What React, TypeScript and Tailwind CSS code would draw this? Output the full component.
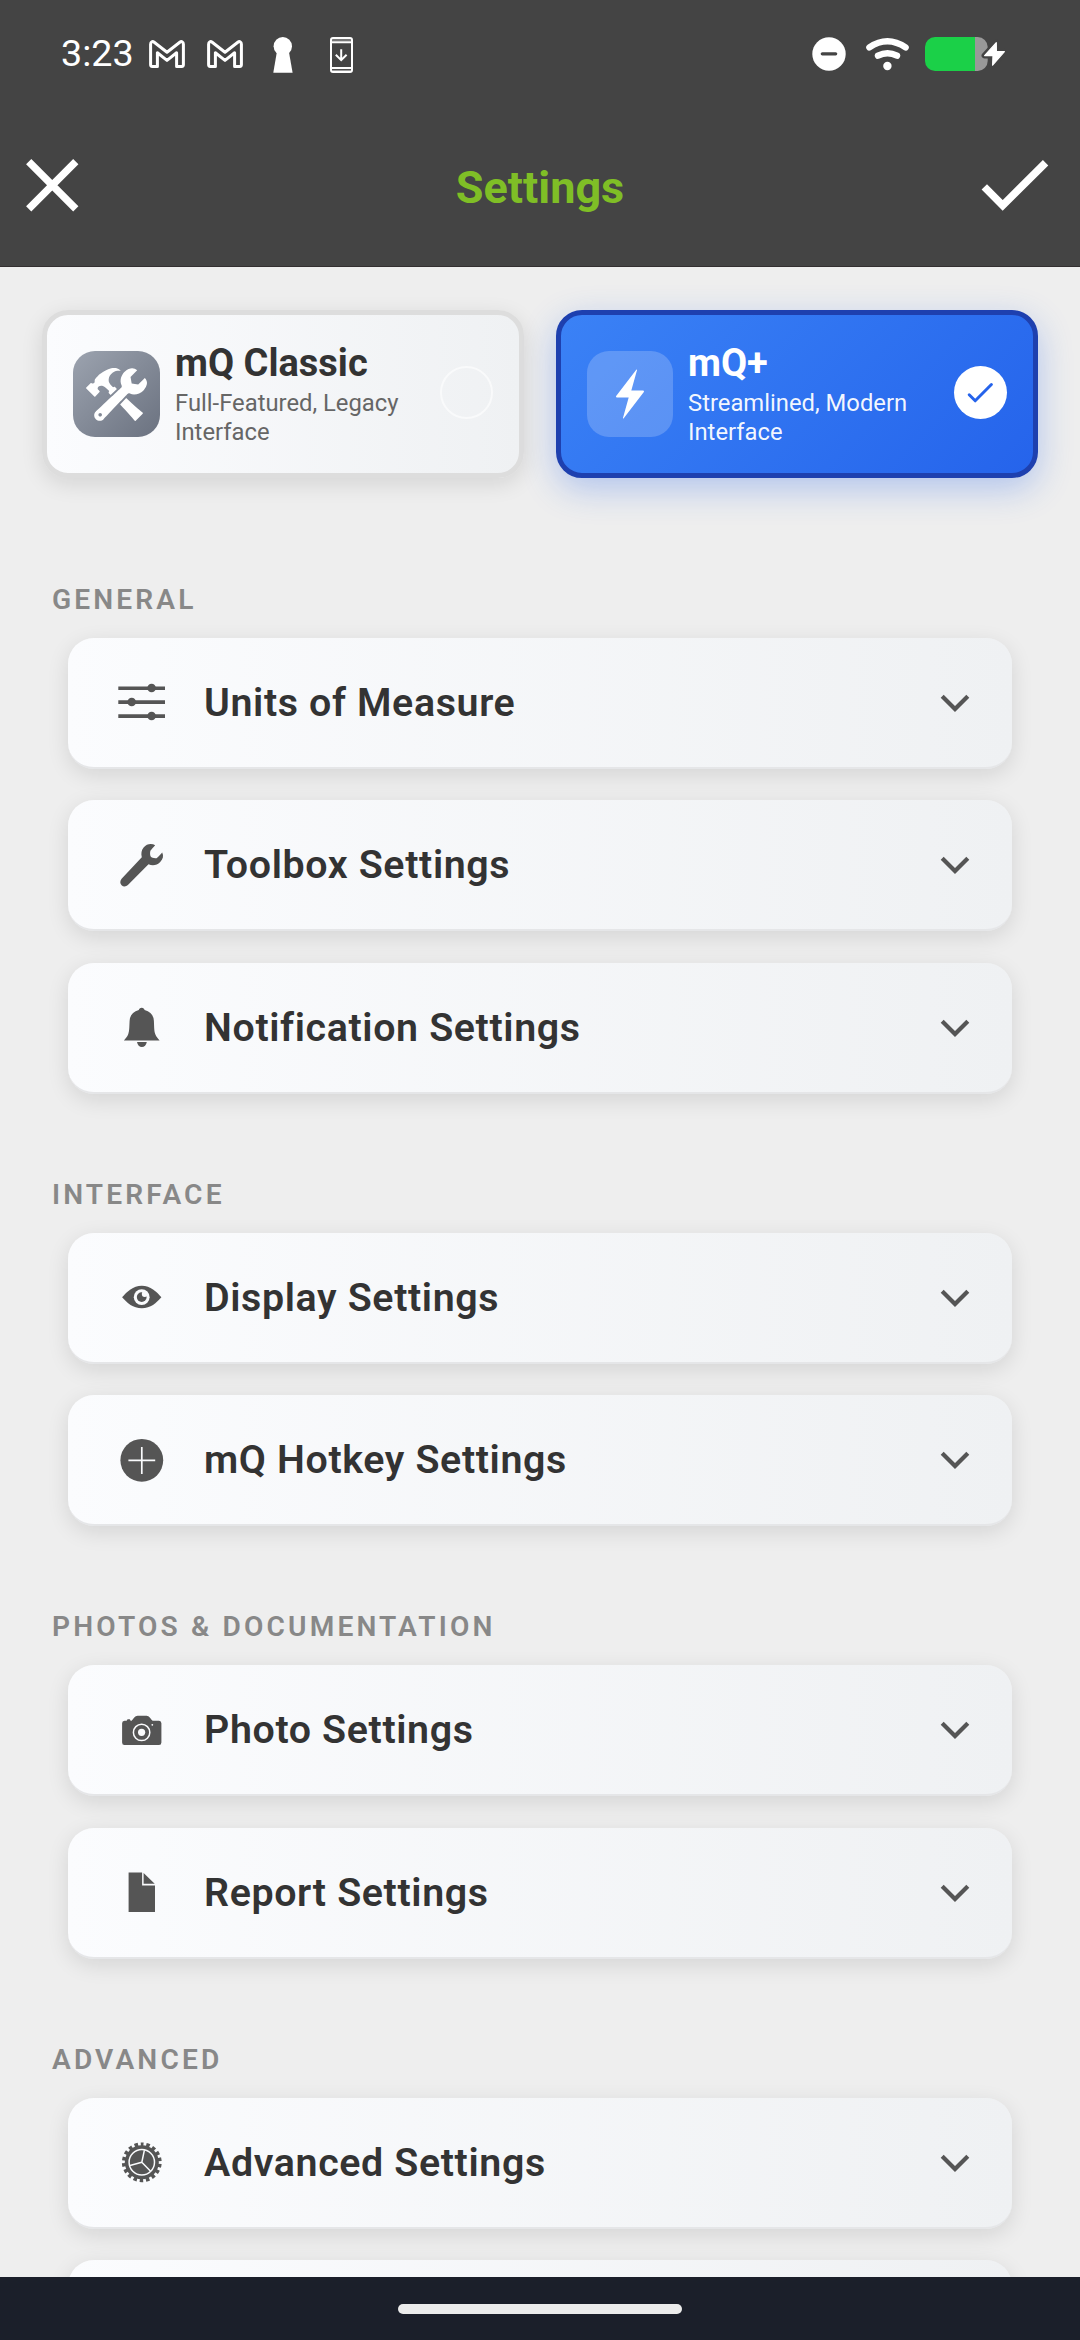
import type { ReactNode } from "react";
import { IoIosConstruct, IoIosFlash } from "react-icons/io";

function GmailGlyph() {
  return (
    <svg className="h-9 w-9" viewBox="0 0 36 36" fill="none" stroke="#fff" strokeWidth="3" strokeLinejoin="round">
      <path d="M1.6 27.5V7.2C1.6 4.6 3.6 4 5.2 5.2L18 15.2L30.8 5.2C32.4 4 34.4 4.6 34.4 7.2V27.5Q34.4 29.4 32.8 29.4H27.6V15.8L18 23.4L8.4 15.8V29.4H3.2Q1.6 29.4 1.6 27.5Z" />
    </svg>
  );
}

function StatusBar() {
  return (
    <div className="flex h-[110px] shrink-0 items-center pl-[61px] pr-[75px] text-white">
      <span className="mb-1 w-[73px] whitespace-nowrap text-[37.7px] leading-[44px]">3:23</span>
      <div className="ml-[15px] flex items-center gap-[22px]">
        <GmailGlyph />
        <GmailGlyph />
      </div>
      <svg className="ml-[30px] h-9 w-5" viewBox="0 0 20 36" fill="#fff">
        <circle cx="9.8" cy="9.2" r="9.2" />
        <path d="M4.2 13H15.6L19.6 35.8H.3Z" />
      </svg>
      <svg className="ml-[37px] h-9 w-[23px]" viewBox="0 0 23 36" fill="none" stroke="#fff" strokeWidth="2">
        <rect x="1" y="1" width="21" height="34" rx="2" />
        <path d="M2 5.3H21M2 31H21" />
        <path d="M2 3H21M2 33.4H21" strokeWidth="1" stroke="#aaa" />
        <path d="M11.2 12.3V22.6M5.8 17.8L11.2 23.2L16.6 17.8" />
      </svg>
      <svg className="ml-auto h-9 w-[34px]" viewBox="0 0 34 36">
        <circle cx="17" cy="17" r="16.7" fill="#fff" />
        <path d="M10.3 16.8H23.7" stroke="#444" strokeWidth="3.2" strokeLinecap="round" />
      </svg>
      <svg className="ml-5 h-9 w-[43px]" viewBox="0 0 43 36" fill="none" stroke="#fff" strokeWidth="6.4" strokeLinecap="round">
        <path d="M3.4 10.4Q21.4 -1.8 39.6 10.4M12 18.7Q21.5 13.9 31 18.7" />
        <circle cx="21.4" cy="29" r="4.2" fill="#fff" stroke="none" />
      </svg>
      <svg className="ml-4 h-9 w-20" viewBox="0 0 80 36">
        <path d="M50 0H52.7A10 10 0 0 1 62.7 10V24A10 10 0 0 1 52.7 34H50Z" fill="#999" />
        <path d="M50 0H10A10 10 0 0 0 0 10V24A10 10 0 0 0 10 34H50Z" fill="#1bd048" />
        <path d="M71.3 5.7L59.6 18.6H68L67.6 28.2L79.4 14.6H71.4Z" fill="#fff" stroke="#444" strokeWidth="6" strokeLinejoin="round" />
        <path d="M71.3 5.7L59.6 18.6H68L67.6 28.2L79.4 14.6H71.4Z" fill="#fff" stroke="#fff" strokeWidth="1.2" strokeLinejoin="round" />
      </svg>
    </div>
  );
}

function TitleBar() {
  return (
    <div className="flex h-[157px] shrink-0 items-start justify-between border-b border-[#332f30] px-[26px] pt-[49px]">
      <svg className="h-[53px] w-[130px]" viewBox="0 0 130 53" stroke="#fff" strokeWidth="7.4">
        <path d="M2.7 2.7L49.8 49.8M49.8 2.7L2.7 49.8" />
      </svg>
      <h1 className="text-[45px] font-bold leading-[58px] text-[#7fbe26]">Settings</h1>
      <svg className="h-[53px] w-[130px]" viewBox="0 0 130 53" fill="none" stroke="#fff" strokeWidth="7.6">
        <path d="M60.3 27.8L78.7 46.4L121.6 3.7" />
      </svg>
    </div>
  );
}

type ModeCardProps = { title: string; subtitle: string; selected?: boolean; icon: ReactNode };

function ModeCard({ title, subtitle, selected, icon }: ModeCardProps) {
  return (
    <div
      className={
        selected
          ? "flex h-[168px] w-[482px] items-center rounded-[26px] border-5 border-[#1e40af] bg-linear-135 from-[#3b82f6] to-[#2563eb] bg-origin-border pl-[26px] pr-[26px] text-white shadow-[0_11px_34px_rgba(37,99,235,0.3)]"
          : "flex h-[168px] w-[482px] items-center rounded-[26px] border-5 border-[#dddddd] bg-linear-to-r from-[#fbfcfe] to-[#eff1f3] pl-[26px] pr-[26px] text-[#333] shadow-[0_6px_22px_rgba(0,0,0,0.11)]"
      }
    >
      <div
        className={
          selected
            ? "flex size-[86px] shrink-0 items-center justify-center rounded-[22px] bg-white/20"
            : "flex h-[86px] w-[87px] shrink-0 items-center justify-center rounded-[22px] bg-linear-135 from-[#9ca3af] to-[#6b7280]"
        }
      >
        {icon}
      </div>
      <div className="ml-[15px] flex-1">
        <div className="text-[38px] font-bold leading-[44px]">{title}</div>
        <div className={selected ? "mt-1 text-[23.8px] leading-[29px] text-white/95" : "mt-1 text-[23.8px] leading-[29px] text-[#666]"}>
          {subtitle}
        </div>
      </div>
      {selected ? (
        <div className="mb-1 flex size-[53px] shrink-0 items-center justify-center rounded-full bg-white">
          <svg className="h-[53px] w-[53px]" viewBox="0 0 53 53" fill="none" stroke="#2563eb" strokeWidth="3" strokeLinecap="round" strokeLinejoin="round">
            <path d="M15.2 28.8L21.2 34.8L37.4 18.5" />
          </svg>
        </div>
      ) : (
        <div className="mb-1 size-[53px] shrink-0 rounded-full border-2 border-white/60" />
      )}
    </div>
  );
}

const icons: Record<string, ReactNode> = {
  options: (
    <g>
      <path d="M.3 10.2H47M.3 24.1H47M.3 38.1H47" stroke="#555" strokeWidth="3.6" />
      <circle cx="33.6" cy="10" r="4.3" />
      <circle cx="13.7" cy="24" r="4.3" />
      <circle cx="33.6" cy="38" r="4.3" />
    </g>
  ),
  wrench: (
    <path d="M37.2 5.2C33.5 3 28.5 3.8 25.8 7.3C23.3 10.4 22.9 13.7 23.8 17.3L3.6 38.8C1.8 40.8 1.9 43.7 3.6 45.3C5.3 46.9 8 46.9 9.9 45.1L30.5 24.3C34.5 25.9 39 25.4 42.2 22C45 19 45.9 15.6 44.2 12.4C42.4 14.4 40.6 16.8 38.5 18.2C36.2 18.4 33.6 18 32.7 16.6C31.9 15 31.9 12.6 32.4 10.8C33.8 9 35.5 7 37.2 5.2Z" />
  ),
  bell: (
    <path d="M23.7 4.7C22.1 4.7 21 5.7 20.8 7C15 8.5 11.8 12.5 11.6 18C11.3 25 11.3 28 10.3 31C9.3 34 7.5 35.3 5.9 37.4H41.6C40 35.3 38.2 34 37.2 31C36.2 28 36.2 25 35.9 18C35.7 12.5 32.5 8.5 26.6 7C26.4 5.7 25.3 4.7 23.7 4.7ZM19 39H28.8C28.3 42 26.3 44.1 23.9 44.1S19.5 42 19 39Z" />
  ),
  eye: (
    <g>
      <path d="M4.1 24.3C9 18.5 15 12.7 23.8 12.7S38.4 18.5 43.4 24.3C38.4 30 32.6 35.3 23.8 35.3S9 30 4.1 24.3Z" />
      <circle cx="23.7" cy="24.2" r="7.9" fill="#fafbfd" />
      <circle cx="23.7" cy="24.1" r="4.9" />
      <circle cx="26.7" cy="21" r="2.9" fill="#fafbfd" />
    </g>
  ),
  plus: (
    <g>
      <circle cx="23.8" cy="25.3" r="21.4" />
      <path d="M10.4 25.3H37.2M23.8 12V39" stroke="#fafbfd" strokeWidth="1.7" />
    </g>
  ),
  camera: (
    <g>
      <path d="M6.5 15.7H8.6L9.6 14.2H11.8L12.6 15.7H13.6C15.5 14 17 10.8 19.6 10.8H28.6C31 10.8 32.6 14 34.6 15.7H41Q43.4 15.9 43.4 18.3V37.5Q43.4 40 41 40H6.5Q4.1 40 4.1 37.5V18.3Q4.1 15.9 6.5 15.7Z" />
      <circle cx="23.6" cy="27.4" r="8.2" fill="none" stroke="#fafbfd" strokeWidth="1.5" />
      <circle cx="23.6" cy="27.3" r="3.6" fill="#fafbfd" />
      <circle cx="34.3" cy="19.8" r="0.9" fill="#fafbfd" />
    </g>
  ),
  document: <path d="M10.6 4.4H24.1V17.6H37V44H10.6ZM25.6 5L36.7 15.8H25.6Z" />,
  gear: (
    <g>
      <circle cx="23.8" cy="24.3" r="18" fill="none" stroke="#555" strokeWidth="3.8" strokeDasharray="3.5 2.783" strokeDashoffset="1.75" transform="rotate(-90 23.8 24.3)" />
      <circle cx="23.8" cy="24.3" r="17" />
      <circle cx="23.8" cy="24.3" r="12.7" fill="none" stroke="#fafbfd" strokeWidth="1.5" />
      <path d="M23.8 24.3L26.4 12.2M23.8 24.3L12 27.4M23.8 24.3L32.6 33.2" stroke="#fafbfd" strokeWidth="1.5" />
    </g>
  ),
};

function SettingsRow({ icon, label }: { icon?: string; label?: string }) {
  return (
    <div className="flex h-[131px] shrink-0 items-center rounded-[26px] border-b-2 border-[#e5e6e8] bg-linear-to-r from-[#fbfcfe] to-[#eff1f3] pl-[50px] pr-[42px] shadow-[0_6px_22px_rgba(0,0,0,0.11)]">
      {icon && (
        <svg className="h-[49px] w-12" viewBox="0 0 48 49" fill="#555">
          {icons[icon]}
        </svg>
      )}
      {label && (
        <span className="ml-[38px] flex-1 whitespace-nowrap text-[39.375px] font-semibold leading-[49px] tracking-[0.63px] text-[#333]">
          {label}
        </span>
      )}
      {label && (
        <svg className="h-[49px] w-[30px]" viewBox="0 0 30 49" fill="none" stroke="#555" strokeWidth="4.2">
          <path d="M2.2 18.2L15 31L27.8 18.2" />
        </svg>
      )}
    </div>
  );
}

function Section({ title, gap, children }: { title: string; gap: string; children: ReactNode }) {
  return (
    <section className="shrink-0">
      <h2 className="mb-[18px] pl-[52px] text-[28.125px] font-semibold leading-[41px] tracking-[3.15px] text-[#888]">{title}</h2>
      <div className={"flex flex-col pl-[68px] pr-[68px] " + gap}>{children}</div>
    </section>
  );
}

export default function App() {
  return (
    <div className="flex h-[2340px] w-[1080px] flex-col overflow-hidden bg-[#eee] font-['Roboto',sans-serif]">
      <header className="flex shrink-0 flex-col bg-[#444]">
        <StatusBar />
        <TitleBar />
      </header>
      <main className="flex min-h-0 flex-1 flex-col overflow-hidden pt-[43px]">
        <div className="flex shrink-0 gap-8 pl-[42px]">
          <ModeCard title="mQ Classic" subtitle="Full-Featured, Legacy Interface" icon={<IoIosConstruct className="size-[65px] text-white" />} />
          <ModeCard selected title="mQ+" subtitle="Streamlined, Modern Interface" icon={<IoIosFlash className="size-14 text-white" />} />
        </div>
        <div className="mt-[101px] flex flex-col gap-20">
          <Section title="GENERAL" gap="gap-[31.4px]">
            <SettingsRow icon="options" label="Units of Measure" />
            <SettingsRow icon="wrench" label="Toolbox Settings" />
            <SettingsRow icon="bell" label="Notification Settings" />
          </Section>
          <Section title="INTERFACE" gap="gap-[31.2px]">
            <SettingsRow icon="eye" label="Display Settings" />
            <SettingsRow icon="plus" label="mQ Hotkey Settings" />
          </Section>
          <Section title="PHOTOS &amp; DOCUMENTATION" gap="gap-8">
            <SettingsRow icon="camera" label="Photo Settings" />
            <SettingsRow icon="document" label="Report Settings" />
          </Section>
          <Section title="ADVANCED" gap="gap-[31px]">
            <SettingsRow icon="gear" label="Advanced Settings" />
            <SettingsRow />
          </Section>
        </div>
      </main>
      <footer className="flex h-[63px] shrink-0 justify-center bg-[#1b1f2a] pt-[27px]">
        <div className="h-2.5 w-[284px] rounded-full bg-[#ececec]" />
      </footer>
    </div>
  );
}
